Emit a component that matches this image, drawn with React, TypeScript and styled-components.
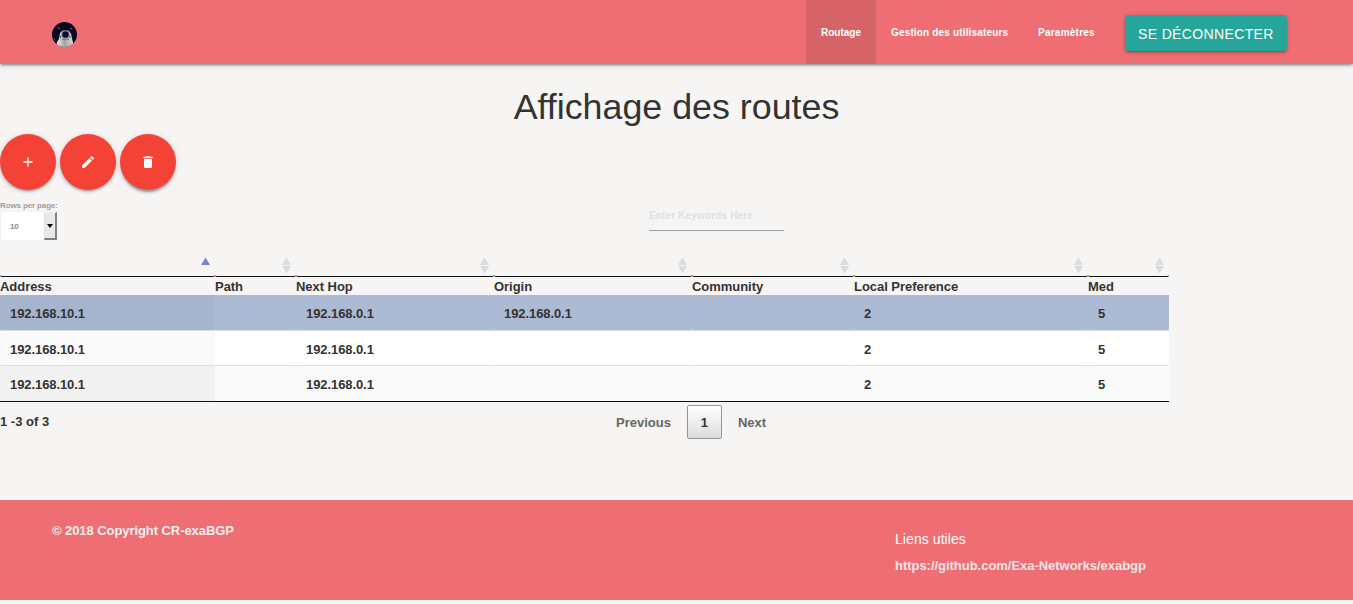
import React from 'react';
import styled, { createGlobalStyle, css } from 'styled-components';

const GlobalStyle = createGlobalStyle`
  *, *::before, *::after { box-sizing: border-box; }
  body {
    margin: 0;
    background: #f6f5f4;
    color: #333;
    font: bold 13px/18px "Liberation Sans", Arial, sans-serif;
  }
`;

const Page = styled.div`
  height: 604px;
  display: flex;
  flex-direction: column;
  overflow: hidden;
`;

const Navbar = styled.nav`
  height: 64px;
  flex: none;
  display: flex;
  align-items: center;
  padding: 0 66px 0 52px;
  background: #ee6e73;
  box-shadow: 0 2px 2px 0 rgba(0, 0, 0, 0.14), 0 3px 1px -2px rgba(0, 0, 0, 0.12), 0 1px 5px 0 rgba(0, 0, 0, 0.2);
`;

const Logo = styled.svg`
  width: 25px;
  height: 25px;
  display: block;
  margin: 5px auto 0 0;
`;

const NavItem = styled.a<{ $active?: boolean; $width: number; $spacing?: number }>`
  width: ${(p) => p.$width}px;
  height: 64px;
  line-height: 65px;
  padding-left: 15px;
  font-size: 10px;
  white-space: nowrap;
  letter-spacing: ${(p) => p.$spacing ?? 0}px;
  color: #fff;
  background: ${(p) => (p.$active ? '#d66367' : 'transparent')};
`;

const LogoutButton = styled.button`
  width: 162px;
  height: 36px;
  margin: 2px 0 0 15px;
  padding: 2px 0 0 13px;
  border: 0;
  border-radius: 4px;
  background: #26a69a;
  color: #fff;
  font: 14px/34px "Liberation Sans", Arial, sans-serif;
  letter-spacing: 0.36px;
  text-align: left;
  white-space: nowrap;
  box-shadow: 0 2px 2px 0 rgba(0, 0, 0, 0.14), 0 3px 1px -2px rgba(0, 0, 0, 0.12), 0 1px 5px 0 rgba(0, 0, 0, 0.2);
`;

const Title = styled.h1`
  height: 70px;
  margin: 0;
  padding-top: 23px;
  flex: none;
  font-weight: 400;
  font-size: 35.8px;
  line-height: 40px;
  text-align: center;
`;

const Actions = styled.div`
  display: flex;
  gap: 4px;
  height: 56px;
  flex: none;
`;

const RoundButton = styled.button<{ $raised?: boolean }>`
  width: 56px;
  height: 56px;
  padding: 0;
  border: 0;
  border-radius: 50%;
  display: flex;
  align-items: center;
  justify-content: center;
  background: #f44336;
  box-shadow: ${(p) =>
    p.$raised
      ? '0 3px 3px 0 rgba(0,0,0,.14), 0 1px 7px 0 rgba(0,0,0,.12), 0 3px 1px -1px rgba(0,0,0,.2)'
      : '0 2px 2px 0 rgba(0,0,0,.14), 0 3px 1px -2px rgba(0,0,0,.12), 0 1px 5px 0 rgba(0,0,0,.2)'};
  svg { width: 16px; height: 16px; fill: #fff; }
`;

const Controls = styled.div`
  display: flex;
  height: 62px;
  flex: none;
  padding-top: 10px;
`;

const RowsPerPage = styled.label`
  width: 649px;
  font-size: 8px;
  line-height: 11px;
  letter-spacing: -0.13px;
  color: #9e9e9e;
`;

const SelectBox = styled.span`
  display: flex;
  width: 57px;
  height: 30px;
  border: 1px solid #f2f2f2;
  border-right: 0;
  background: #fff;
  line-height: 29px;
  letter-spacing: -0.2px;
  color: #8b8b8b;
`;

const SelectValue = styled.span`
  flex: 1;
  padding-left: 9px;
`;

const SelectArrow = styled.span`
  width: 13px;
  height: 28px;
  display: flex;
  align-items: center;
  justify-content: center;
  background: #e8e8e7;
  border: solid #808080;
  border-width: 0 2px 2px 0;
  border-top: 1px solid #f2f2f2;
  border-left: 1px solid #e0e0e0;
  &::before {
    content: '';
    border: 3.5px solid transparent;
    border-top: 4px solid #000;
    border-bottom: 0;
  }
`;

const Search = styled.input`
  width: 135px;
  height: 31px;
  margin: 0;
  padding: 0;
  border: 0;
  border-bottom: 1px solid #9e9e9e;
  background: transparent;
  font: bold 10px "Liberation Sans", Arial, sans-serif;
  letter-spacing: 0.15px;
  &::placeholder { color: #e0e0e0; opacity: 1; }
`;

const Table = styled.table`
  width: 1169px;
  table-layout: fixed;
  border-collapse: separate;
  border-spacing: 0;
  border-bottom: 1px solid #111;
`;

const SortCell = styled.th`
  height: 25px;
  padding: 6px 5px 0 0;
  border-bottom: 1px solid #111;
  border-radius: 2px;
  vertical-align: top;
`;

const SortIcon = styled.svg`
  display: block;
  width: 9px;
  height: 15px;
  margin-left: auto;
`;

const HeadCell = styled.td`
  height: 18px;
  padding: 1px 0 0;
  line-height: 17px;
  letter-spacing: -0.04px;
`;

type Tone = 'selected' | 'odd' | 'even';
const tones: Record<Tone, [string, string]> = {
  selected: ['#a6b4cd', '#acbad4'],
  odd: ['#fafafa', '#ffffff'],
  even: ['#f1f1f1', '#f9f9f9'],
};

const Row = styled.tr<{ $tone: Tone }>`
  background: ${(p) => tones[p.$tone][1]};
  td:first-child { background: ${(p) => tones[p.$tone][0]}; }
`;

const Cell = styled.td<{ $height: number; $last: boolean; $shift: number }>`
  height: ${(p) => p.$height}px;
  padding: ${(p) => p.$shift}px 0 0 10px;
  line-height: 18px;
  letter-spacing: -0.08px;
  ${(p) => !p.$last && css`
    border-bottom: 1px solid #ddd;
    border-radius: 0 0 2px 2px;
  `}
`;

const TableFooter = styled.div`
  height: 98px;
  flex: none;
  display: flex;
  align-items: flex-start;
`;

const Info = styled.span`
  width: 600px;
  padding-top: 11px;
`;

const PageButton = styled.a<{ $current?: boolean }>`
  height: 34px;
  margin-top: 3px;
  line-height: 34px;
  padding: 1px 16px 0;
  color: #666;
  ${(p) =>
    p.$current &&
    css`
      width: 35px;
      padding: 0;
      text-align: center;
      color: #333;
      border: 1px solid #979797;
      border-radius: 2px;
      background: linear-gradient(#fff, #dcdcdc);
    `}
`;

const Footer = styled.footer`
  height: 100px;
  flex: none;
  display: flex;
  padding-left: 52px;
  background: #ee6e73;
`;

const Copyright = styled.p`
  width: 843px;
  margin: 0;
  padding-top: 22px;
  letter-spacing: -0.07px;
  color: #f9efef;
`;

const Links = styled.div`
  padding-top: 30px;
  display: flex;
  flex-direction: column;
  gap: 9px;
  letter-spacing: -0.03px;
  color: #f3e5e5;
`;

const LinksTitle = styled.h5`
  margin: 0;
  font-size: 14px;
  line-height: 18px;
  letter-spacing: 0.07px;
  font-weight: 400;
  color: #fff;
`;

const Penguin = () => (
  <Logo viewBox="0 0 25 25">
    <defs>
      <clipPath id="disc"><circle cx="12.5" cy="12.5" r="12.5" /></clipPath>
      <linearGradient id="belly">
        <stop offset="0" stopColor="#f4f4f4" />
        <stop offset=".5" stopColor="#a6a6a6" />
        <stop offset="1" stopColor="#d8d8d8" />
      </linearGradient>
    </defs>
    <g clipPath="url(#disc)">
      <rect width="25" height="25" fill="#080820" />
      <path d="M4 25l1-5 2-3 1-6 2.500-2.500h6l2.500 3 1 5 1 4v5z" fill="url(#belly)" />
      <path d="M5.500 5.500l2.500 1.500M18 7l2-.7" stroke="#80848e" strokeWidth=".9" />
      <circle cx="13.500" cy="12.500" r="4" fill="#77777f" />
      <circle cx="13.500" cy="12.500" r="3.100" fill="#0b0b35" />
      <path d="M8.500 14v1.500M18 14v1.500" stroke="#222" />
      <path d="M10 17.300q3.500 1 7 0" fill="none" stroke="#777" />
      <path d="M2 16l1.500 2.500" stroke="#50505c" />
    </g>
  </Logo>
);

const Sort = ({ active }: { active?: boolean }) => (
  <SortIcon viewBox="0 0 9 15">
    <path d="M4.5 -.5L9 7H0z" fill={active ? '#7b80dc' : '#dcdcdc'} />
    {!active && <path d="M0 8h9l-4.5 7.500z" fill="#dcdcdc" />}
  </SortIcon>
);

const columns: [string, number][] = [
  ['Address', 215], ['Path', 81], ['Next Hop', 198], ['Origin', 198],
  ['Community', 162], ['Local Preference', 234], ['Med', 81],
];

const routes: { tone: Tone; height: number; shift: number; values: string[] }[] = [
  { tone: 'selected', height: 36, shift: 2, values: ['192.168.10.1', '', '192.168.0.1', '192.168.0.1', '', '2', '5'] },
  { tone: 'odd', height: 35, shift: 4, values: ['192.168.10.1', '', '192.168.0.1', '', '', '2', '5'] },
  { tone: 'even', height: 35, shift: 2, values: ['192.168.10.1', '', '192.168.0.1', '', '', '2', '5'] },
];

export default function App() {
  return (
    <Page>
      <GlobalStyle />
      <Navbar>
        <Penguin />
        <NavItem $active $width={70}>Routage</NavItem>
        <NavItem $width={147} $spacing={0.16}>Gestion des utilisateurs</NavItem>
        <NavItem $width={87} $spacing={0.24}>Paramètres</NavItem>
        <LogoutButton>SE DÉCONNECTER</LogoutButton>
      </Navbar>
      <Title>Affichage des routes</Title>
      <Actions>
        <RoundButton aria-label="Ajouter">
          <svg viewBox="0 0 24 24"><path d="M19 13h-6v6h-2v-6H5v-2h6V5h2v6h6v2z" /></svg>
        </RoundButton>
        <RoundButton aria-label="Modifier">
          <svg viewBox="0 0 24 24"><path d="M3 17.25V21h3.75L17.81 9.94l-3.75-3.75L3 17.25zM20.71 7.04a1 1 0 0 0 0-1.41l-2.34-2.34a1 1 0 0 0-1.41 0l-1.83 1.83 3.75 3.75 1.83-1.83z" /></svg>
        </RoundButton>
        <RoundButton $raised aria-label="Supprimer">
          <svg viewBox="0 0 24 24"><path d="M6 19c0 1.1.9 2 2 2h8c1.100 0 2-.9 2-2V7H6v12zM19 4h-3.500l-1-1h-5l-1 1H5v2h14V4z" /></svg>
        </RoundButton>
      </Actions>
      <Controls>
        <RowsPerPage>
          Rows per page:
          <SelectBox>
            <SelectValue>10</SelectValue>
            <SelectArrow />
          </SelectBox>
        </RowsPerPage>
        <Search placeholder="Enter Keywords Here" />
      </Controls>
      <Table>
        <colgroup>
          {columns.map(([name, width]) => <col key={name} width={width} />)}
        </colgroup>
        <thead>
          <tr>
            {columns.map(([name], i) => <SortCell key={name}><Sort active={i === 0} /></SortCell>)}
          </tr>
        </thead>
        <tbody>
          <tr>{columns.map(([name]) => <HeadCell key={name}>{name}</HeadCell>)}</tr>
          {routes.map((route, r) => (
            <Row key={r} $tone={route.tone}>
              {route.values.map((value, c) => (
                <Cell key={c} $height={route.height} $shift={route.shift} $last={r === routes.length - 1}>
                  {value}
                </Cell>
              ))}
            </Row>
          ))}
        </tbody>
      </Table>
      <TableFooter>
        <Info>1 -3 of 3</Info>
        <PageButton>Previous</PageButton>
        <PageButton $current>1</PageButton>
        <PageButton>Next</PageButton>
      </TableFooter>
      <Footer>
        <Copyright>© 2018 Copyright CR-exaBGP</Copyright>
        <Links>
          <LinksTitle>Liens utiles</LinksTitle>
          <span>https://github.com/Exa-Networks/exabgp</span>
        </Links>
      </Footer>
    </Page>
  );
}
